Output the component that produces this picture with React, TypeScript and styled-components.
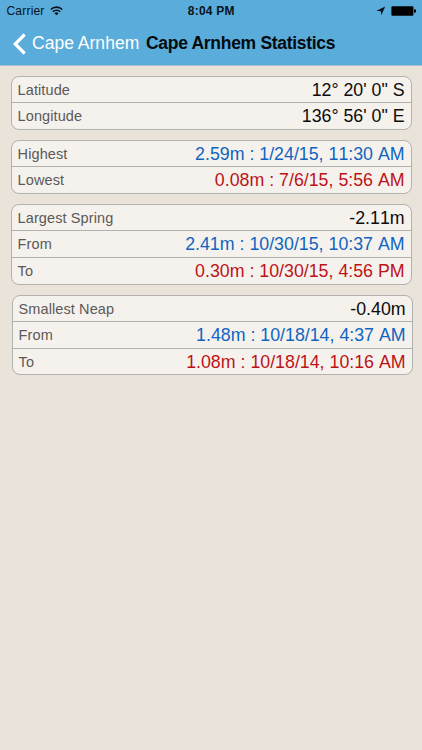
import React from "react";
import styled, { createGlobalStyle } from "styled-components";

const GlobalStyle = createGlobalStyle`
  * { box-sizing: border-box; }
  body {
    margin: 0;
    background: #eae3d9;
    font-family: "Liberation Sans", Arial, sans-serif;
  }
`;

const Screen = styled.div`
  width: 422px;
  height: 750px;
  overflow: hidden;
  background: #eae3d9;
`;

const Header = styled.header`
  height: 66px;
  background: #5aacdb;
  border-bottom: 1px solid #a9bfcc;
`;

const StatusBar = styled.div`
  display: grid;
  grid-template-columns: 1fr auto 1fr;
  height: 22px;
  padding: 0 6px 0 6.5px;
  align-items: center;
  color: #07131b;
  font-size: 12px;
  line-height: 22px;
`;

const Carrier = styled.div`
  display: flex;
  align-items: center;
  gap: 5.5px;
  letter-spacing: 0.2px;
`;

const Clock = styled.div`
  font-weight: 700;
  letter-spacing: 0.2px;
`;

const Indicators = styled.div`
  display: flex;
  align-items: center;
  justify-content: flex-end;
  gap: 5px;
`;

const NavBar = styled.nav`
  display: flex;
  align-items: center;
  height: 43px;
  padding-left: 13px;
  font-size: 17.5px;
  line-height: 43px;
  white-space: nowrap;
`;

const BackButton = styled.a`
  display: flex;
  align-items: center;
  width: 133px;
  gap: 6px;
  color: #fff;
  letter-spacing: 0.02px;
`;

const Title = styled.h1`
  margin: 0;
  color: #050a0e;
  font-size: 17.5px;
  font-weight: 700;
  letter-spacing: -0.3px;
`;

const Cards = styled.main`
  padding: 10px 11px 0;
`;

const Card = styled.section<{ $shift?: number }>`
  width: 401px;
  margin: 0 0 10px ${(p) => p.$shift ?? 0}px;
  border: 1px solid #b3b1af;
  border-radius: 8px;
  background: #f5f2ee;
  overflow: hidden;
`;

const Row = styled.div<{ $height: number }>`
  display: flex;
  justify-content: space-between;
  height: ${(p) => p.$height}px;
  padding: 0 6.4px 0 5.6px;
  line-height: 26px;
  white-space: nowrap;

  & + & {
    border-top: 1px solid #b3b1af;
  }
`;

const Label = styled.span`
  color: #5b5957;
  font-size: 14.5px;
  letter-spacing: 0.1px;
`;

const tones = { plain: "#0c0c0c", high: "#1064c0", low: "#bd1218" };

const Value = styled.span<{ $tone: keyof typeof tones }>`
  color: ${(p) => tones[p.$tone]};
  font-size: 17.8px;
  font-kerning: none;
`;

type Entry = { label: string; value: string; tone?: keyof typeof tones; height: number };
type Group = { shift?: number; rows: Entry[] };

const groups: Group[] = [
  {
    rows: [
      { label: "Latitude", value: "12° 20' 0\" S", height: 25 },
      { label: "Longitude", value: "136° 56' 0\" E", height: 27 },
    ],
  },
  {
    rows: [
      { label: "Highest", value: "2.59m : 1/24/15, 11:30 AM", tone: "high", height: 25 },
      { label: "Lowest", value: "0.08m : 7/6/15, 5:56 AM", tone: "low", height: 27 },
    ],
  },
  {
    rows: [
      { label: "Largest Spring", value: "-2.11m", height: 25 },
      { label: "From", value: "2.41m : 10/30/15, 10:37 AM", tone: "high", height: 27 },
      { label: "To", value: "0.30m : 10/30/15, 4:56 PM", tone: "low", height: 27 },
    ],
  },
  {
    shift: 1,
    rows: [
      { label: "Smallest Neap", value: "-0.40m", height: 25 },
      { label: "From", value: "1.48m : 10/18/14, 4:37 AM", tone: "high", height: 27 },
      { label: "To", value: "1.08m : 10/18/14, 10:16 AM", tone: "low", height: 26 },
    ],
  },
];

const WifiIcon = () => (
  <svg width="13" height="10" viewBox="0 0 13 10" fill="none" stroke="#07131b" strokeWidth="1.6">
    <path d="M.8 3.5a8.1 8.1 0 0 1 11.4 0" />
    <path d="M2.8 5.7a5.3 5.3 0 0 1 7.4 0" />
    <path d="M6.5 9.2 4.4 7.2a3 3 0 0 1 4.2 0Z" fill="#07131b" stroke="none" />
  </svg>
);

const LocationIcon = () => (
  <svg width="10" height="10" viewBox="0 0 10 10">
    <path d="M9.2.6 5.4 9.2 4.8 5.2.5 4.8Z" fill="#07131b" />
  </svg>
);

const BatteryIcon = () => (
  <svg width="25" height="10" viewBox="0 0 25 10" fill="#000">
    <rect x=".4" y=".2" width="22" height="9.6" rx="1.2" />
    <path d="M23 3.3h.5a1.2 1.2 0 0 1 0 3.4H23Z" />
  </svg>
);

const BackIcon = () => (
  <svg width="13" height="22" viewBox="0 0 13 22" fill="none" stroke="#fff" strokeWidth="3.2">
    <path d="M11.7 1.5 2.2 11l9.5 9.5" />
  </svg>
);

export default function App() {
  return (
    <Screen>
      <GlobalStyle />
      <Header>
        <StatusBar>
          <Carrier>
            Carrier
            <WifiIcon />
          </Carrier>
          <Clock>8:04 PM</Clock>
          <Indicators>
            <LocationIcon />
            <BatteryIcon />
          </Indicators>
        </StatusBar>
        <NavBar>
          <BackButton>
            <BackIcon />
            <span>Cape Arnhem</span>
          </BackButton>
          <Title>Cape Arnhem Statistics</Title>
        </NavBar>
      </Header>
      <Cards>
        {groups.map((group, i) => (
          <Card key={i} $shift={group.shift}>
            {group.rows.map((row) => (
              <Row key={row.label} $height={row.height}>
                <Label>{row.label}</Label>
                <Value $tone={row.tone ?? "plain"}>{row.value}</Value>
              </Row>
            ))}
          </Card>
        ))}
      </Cards>
    </Screen>
  );
}
